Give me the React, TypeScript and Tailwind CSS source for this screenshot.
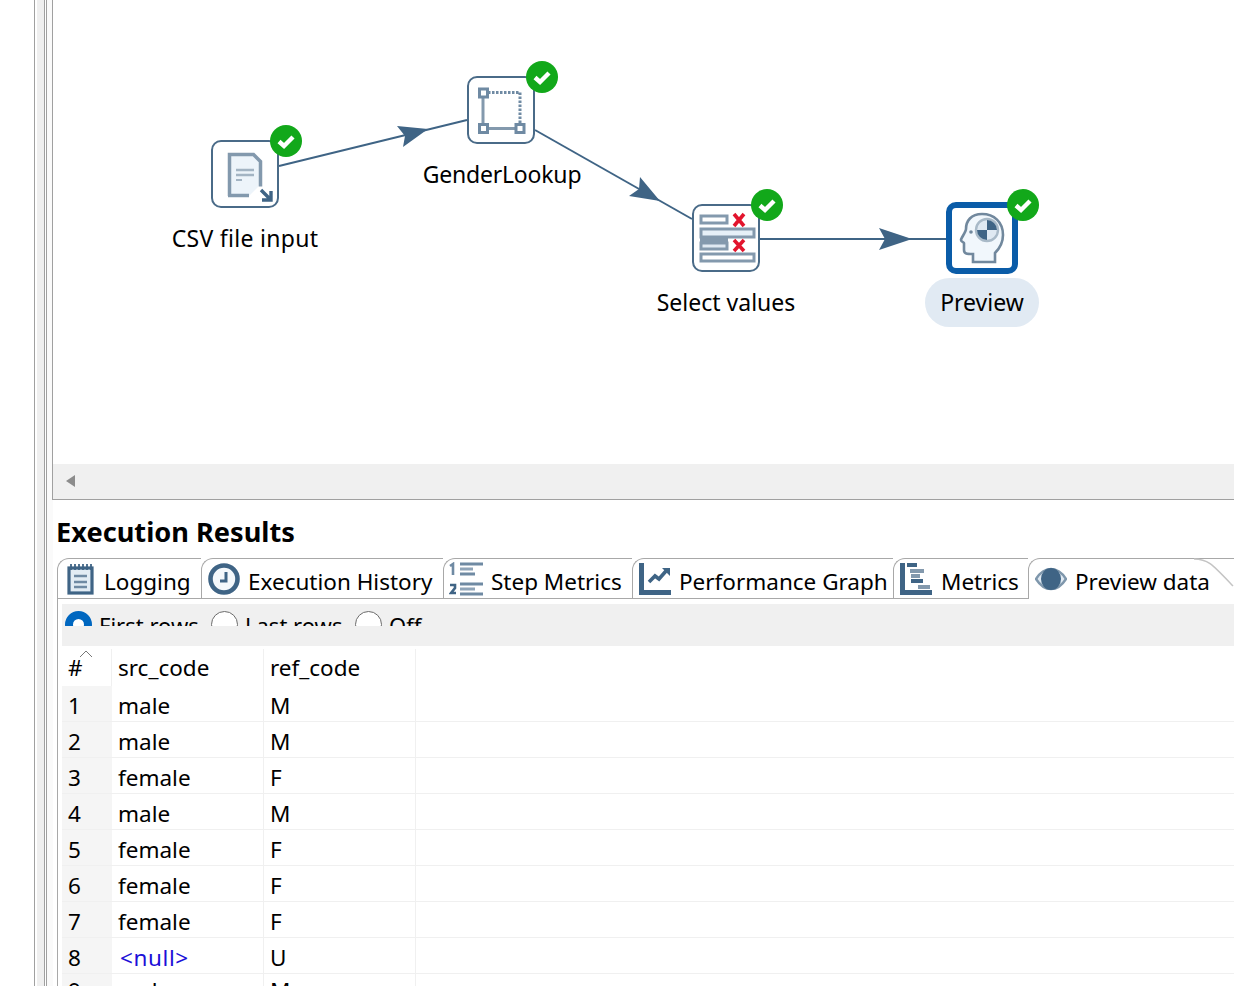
import React from 'react';

const ink = '#3f6485';
const soft = '#8399ad';

const CheckBadge: React.FC<{ className: string }> = ({ className }) => (
  <svg className={`absolute ${className}`} width="32" height="32" viewBox="0 0 32 32">
    <circle cx="16" cy="16" r="16" fill="#12a81a" />
    <path d="M9 16.5l5 4.5 9-9" fill="none" stroke="#fff" strokeWidth="4.4" />
  </svg>
);

const CsvIcon = () => (
  <svg width="56" height="56" viewBox="0 0 56 56">
    <path d="M12 8h25l7 7v23l-12 12H12z" fill="#edf4fa" />
    <path d="M12.5 50V8.5h24l7 7v25" fill="none" stroke={soft} strokeWidth="3.5" />
    <path d="M11 49.5h21" stroke={soft} strokeWidth="3.5" />
    <path d="M19 24h18M19 29h18" stroke="#a3b4c3" strokeWidth="2.5" />
    <path d="M19 34h6" stroke="#a3b4c3" strokeWidth="2" />
    <path d="M44 44l9 9M54 45v9h-9" fill="none" stroke={ink} strokeWidth="3.4" />
  </svg>
);

const LookupIcon = () => (
  <svg width="56" height="56" viewBox="0 0 56 56">
    <path d="M10 15v27M15 46.5h27" stroke={soft} strokeWidth="3" />
    <path d="M15 10.5h32v31" fill="none" stroke="#6f8aa3" strokeWidth="3" strokeDasharray="2.5 1.5" />
    <rect x="6.5" y="7" width="8" height="8" fill="#fff" stroke="#6f8aa3" strokeWidth="3" />
    <rect x="6.5" y="42.5" width="8" height="8" fill="#fff" stroke="#6f8aa3" strokeWidth="3" />
    <rect x="43" y="42.5" width="8" height="8" fill="#fff" stroke="#6f8aa3" strokeWidth="3" />
  </svg>
);

const SelectIcon = () => (
  <svg width="60" height="60" viewBox="0 0 60 60">
    <rect x="5" y="8" width="26" height="7" fill="#fff" stroke={soft} strokeWidth="3" />
    <rect x="5" y="21" width="53" height="8" fill="#e6f0f8" stroke={soft} strokeWidth="3" />
    <rect x="4" y="29" width="28" height="6" fill={soft} />
    <rect x="5" y="35" width="26" height="6" fill="#dfe9f2" stroke={soft} strokeWidth="3" />
    <rect x="5" y="46" width="53" height="7" fill="#fff" stroke={soft} strokeWidth="3" />
    <path d="M38 6l10 12M48 6L38 18M38 32l10 11M48 32L38 43" stroke="#e2142d" strokeWidth="3.6" />
  </svg>
);

const BrainIcon = () => (
  <svg width="48" height="56" viewBox="0 0 48 56">
    <path
      d="M24 4C13 4 8 11 8 19c0 3-5 9-5 11 0 2 3 2 3 3v7c0 4 3 4 9 4v8h22v-9c5-5 8-10 8-18C45 12 36 4 24 4z"
      fill="#f1f7fc"
      stroke="#71889d"
      strokeWidth="2.6"
    />
    <circle cx="29" cy="20" r="11" fill="#dfe9f2" stroke="#a9bac8" strokeWidth="2.4" />
    <path d="M29 10a10 10 0 0 1 10 10H29zM29 20v10a10 10 0 0 1-10-10z" fill={ink} />
    <circle cx="13" cy="22" r="1.8" fill="#71889d" />
  </svg>
);

const LoggingIcon = () => (
  <svg width="28" height="32" viewBox="0 0 28 32">
    <rect x="2" y="5" width="23" height="25" fill="#e2ecf4" stroke={ink} strokeWidth="3.2" />
    <path d="M4 1v6M8 1v6M12 1v6M16 1v6M20 1v6M24 1v6" stroke={ink} strokeWidth="1.8" />
    <path d="M7 13h13M7 19h13M7 24h13" stroke="#6f8aa3" strokeWidth="2.4" />
  </svg>
);

const ClockIcon = () => (
  <svg width="32" height="32" viewBox="0 0 32 32">
    <circle cx="16" cy="16" r="13.5" fill="#f4f8fb" stroke={ink} strokeWidth="4.6" />
    <path d="M18 9v9h-6" fill="none" stroke={ink} strokeWidth="3" />
  </svg>
);

const StepMetricsIcon = () => (
  <svg width="34" height="34" viewBox="0 0 34 34">
    <path d="M1 4l3-2v11" stroke="#6f8aa3" strokeWidth="2.6" fill="none" />
    <path d="M1 23h5v3l-4 5h5" stroke={ink} strokeWidth="2.6" fill="none" />
    <path d="M11 2h23M11 12h15M11 32h23" stroke="#6f8aa3" strokeWidth="2.8" />
    <path d="M11 7h13M11 27h15" stroke="#8fa4b8" strokeWidth="2.8" />
    <path d="M11 22h23" stroke="#6f8aa3" strokeWidth="2.8" />
  </svg>
);

const GraphIcon = () => (
  <svg width="32" height="32" viewBox="0 0 32 32">
    <path d="M2.5 0v29.5H32" fill="none" stroke={ink} strokeWidth="5" />
    <path d="M10 19l6-6 4 3 7-8" fill="none" stroke={ink} strokeWidth="3.6" />
    <path d="M23 5h8v8z" fill={ink} />
  </svg>
);

const GanttIcon = () => (
  <svg width="32" height="32" viewBox="0 0 32 32">
    <path d="M2.5 0v29.5H32" fill="none" stroke={ink} strokeWidth="5" />
    <path d="M7 2h10" stroke={ink} strokeWidth="4" />
    <path d="M10 8h14M11 13h9" stroke={soft} strokeWidth="4" />
    <path d="M11 18h12" stroke={ink} strokeWidth="4" />
    <path d="M18 24h12" stroke={soft} strokeWidth="4" />
  </svg>
);

const EyeIcon = () => (
  <svg width="32" height="24" viewBox="0 0 32 24">
    <path d="M1 12C6 4 11 2 16 2s10 2 15 10c-5 8-10 10-15 10S6 20 1 12z" fill="#dfe9f2" stroke="#7f97ac" strokeWidth="2.4" />
    <ellipse cx="16" cy="12" rx="10" ry="11" fill={ink} />
  </svg>
);

const tabs = [
  { label: 'Logging', width: 'w-[144px]', pad: 'pl-[9px]', gap: 'gap-[9px]', icon: <LoggingIcon /> },
  { label: 'Execution History', width: 'w-[242px]', pad: 'pl-[6px]', gap: 'gap-[8px]', icon: <ClockIcon /> },
  { label: 'Step Metrics', width: 'w-[189px]', pad: 'pl-[5px]', gap: 'gap-[8px]', icon: <StepMetricsIcon /> },
  { label: 'Performance Graph', width: 'w-[261px]', pad: 'pl-[6px]', gap: 'gap-[8px]', icon: <GraphIcon /> },
  { label: 'Metrics', width: 'w-[135px]', pad: 'pl-[6px]', gap: 'gap-[9px]', icon: <GanttIcon /> },
];

const rows = [
  ['1', 'male', 'M'],
  ['2', 'male', 'M'],
  ['3', 'female', 'F'],
  ['4', 'male', 'M'],
  ['5', 'female', 'F'],
  ['6', 'female', 'F'],
  ['7', 'female', 'F'],
  ['8', '<null>', 'U'],
  ['9', 'male', 'M'],
];

const Node: React.FC<{ className: string; children: React.ReactNode }> = ({ className, children }) => (
  <div className={`absolute flex h-[68px] w-[68px] items-center justify-center rounded-[10px] border-2 border-[#4a6b88] bg-white ${className}`}>
    {children}
  </div>
);

const Radio: React.FC<{ on?: boolean; label: string; className: string }> = ({ on, label, className }) => (
  <div className={`flex items-start ${className}`}>
    {on ? (
      <span className="mr-[7px] mt-[7px] h-[27px] w-[27px] shrink-0 rounded-full border-[8px] border-[#0067c0] bg-white" />
    ) : (
      <span className="mr-[7px] mt-[7px] h-[27px] w-[27px] shrink-0 rounded-full border border-[#6b6b6b] bg-white" />
    )}
    <span className="mt-[4px] text-[22px] leading-[34px]">{label}</span>
  </div>
);

export default function App() {
  return (
    <div className="flex h-[986px] w-[1234px] overflow-hidden bg-white font-['Noto_Sans',sans-serif] text-[23px] text-black">
      {/* window sash */}
      <div className="flex h-full w-[53px] shrink-0">
        <div className="w-[34px]" />
        <div className="w-[1px] bg-[#a0a0a0]" />
        <div className="w-[2px]" />
        <div className="w-[7px] bg-[#efefef]" />
        <div className="w-[1px] bg-[#a0a0a0]" />
        <div className="w-[1px]" />
        <div className="w-[1px] bg-[#a0a0a0]" />
        <div className="w-[6px] bg-[#fafafa]" />
      </div>

      <div className="flex min-w-0 flex-1 flex-col">
        {/* transformation canvas */}
        <div className="relative -ml-[1px] h-[464px] shrink-0 border-l border-[#a0a0a0]">
          <svg className="absolute left-[-53px] top-0" width="1234" height="464" viewBox="0 0 1234 464">
            <g stroke="#3f6485" strokeWidth="2" fill="none">
              <path d="M279 166L467 120" />
              <path d="M535 130L692 219" />
              <path d="M760 239H946" />
            </g>
            <g fill="#3f6485">
              <path d="M397 126L428 129L403 147L405 136z" />
              <path d="M640 177L660 201L629 196L639 189z" />
              <path d="M879 228L912 239L879 250L885 239z" />
            </g>
          </svg>

          <Node className="left-[158px] top-[140px]"><CsvIcon /></Node>
          <CheckBadge className="left-[217px] top-[125px]" />
          <div className="absolute left-[92px] top-[221px] w-[200px] text-center tracking-[0.3px]">CSV file input</div>

          <Node className="left-[414px] top-[76px]"><LookupIcon /></Node>
          <CheckBadge className="left-[473px] top-[61px]" />
          <div className="absolute left-[349px] top-[157px] w-[200px] text-center tracking-[-0.2px]">GenderLookup</div>

          <Node className="left-[639px] top-[204px]"><SelectIcon /></Node>
          <CheckBadge className="left-[698px] top-[189px]" />
          <div className="absolute left-[573px] top-[285px] w-[200px] text-center">Select values</div>

          <div className="absolute left-[893px] top-[202px] flex h-[72px] w-[72px] items-center justify-center rounded-[10px] border-[6px] border-[#0a5ca8] bg-white">
            <BrainIcon />
          </div>
          <CheckBadge className="left-[954px] top-[189px]" />
          <div className="absolute left-[872px] top-[278px] flex h-[49px] w-[114px] items-center justify-center rounded-full bg-[#e1eaf3]">Preview</div>
        </div>

        {/* horizontal scroll bar */}
        <div className="-ml-[1px] flex h-[36px] shrink-0 items-center border-b border-l border-[#a0a0a0] bg-[#f0f0f0] pb-[2px] pl-[12px]">
          <svg width="12" height="14" viewBox="0 0 12 14">
            <path d="M10 1v12L1 7z" fill="#8c8c8c" />
          </svg>
        </div>

        {/* execution results */}
        <div className="h-[58px] shrink-0 pl-[3px] pt-[12px] text-[27.2px] font-bold leading-[40px]">Execution Results</div>

        <div className="flex h-[41px] shrink-0 pl-[4px] text-[22.5px]">
          {tabs.map((tab) => (
            <div
              key={tab.label}
              className={`flex h-[41px] items-center overflow-hidden whitespace-nowrap rounded-tl-[12px] border-b border-l border-t border-[#a8a8a8] pt-[3px] ${tab.width} ${tab.pad} ${tab.gap}`}
            >
              <span className="shrink-0 -translate-y-[1px]">{tab.icon}</span>
              <span className="translate-y-[2px]">{tab.label}</span>
            </div>
          ))}
          <div className="relative flex h-[41px] w-[206px] items-center gap-[8px] whitespace-nowrap rounded-tl-[12px] border-l border-t border-[#a8a8a8] pb-[1px] pl-[6px] pt-[3px]">
            <span className="shrink-0 -translate-y-[1px]"><EyeIcon /></span>
            <span className="translate-y-[2px]">Preview data</span>
            <svg className="absolute -top-[1px] right-0" width="40" height="30" viewBox="0 0 40 30">
              <path d="M0 1C14 1 18 6 39 28" fill="none" stroke="#c4c4c4" strokeWidth="1.5" />
            </svg>
          </div>
        </div>

        <div className="ml-[4px] min-h-0 flex-1 border-l border-[#a8a8a8] pl-[4px] pt-[5px] text-[22.5px]">
          {/* clipped radio row */}
          <div className="h-[42px] bg-[#f0f0f0]">
            <div className="relative h-[22px] overflow-hidden">
              <Radio on label="First rows" className="absolute left-[3px] top-0" />
              <Radio label="Last rows" className="absolute left-[149px] top-0" />
              <Radio label="Off" className="absolute left-[293px] top-0" />
            </div>
          </div>

          {/* preview grid */}
          <div className="relative flex h-[40px] items-center pt-[3px]">
            <div className="w-[50px] border-r border-[#f0f0f0] pl-[6px] leading-[37px]">#</div>
            <div className="w-[152px] border-r border-[#f0f0f0] pl-[6px] leading-[37px]">src_code</div>
            <div className="w-[152px] border-r border-[#f0f0f0] pl-[6px] leading-[37px]">ref_code</div>
            <svg className="absolute left-[17px] top-[3px]" width="14" height="9" viewBox="0 0 14 9">
              <path d="M1 8l6-6 6 6" fill="none" stroke="#777" strokeWidth="1" />
            </svg>
          </div>
          {rows.map((row) => {
            // last row runs off the window, keep its tops showing
            const pad = row[0] === '9' ? 'pt-0' : 'pt-[3px]';
            return (
              <div key={row[0]} className="flex h-[36px] border-b border-[#f0f0f0]">
                <div className={`w-[50px] bg-[#f5f5f5] pl-[6px] leading-[34px] ${pad}`}>{row[0]}</div>
                <div className={`w-[152px] border-r border-[#f0f0f0] leading-[34px] ${pad} ${row[1] === '<null>' ? 'pl-[8px] tracking-[0.6px] text-[#1c10d8]' : 'pl-[6px]'}`}>{row[1]}</div>
                <div className={`w-[152px] border-r border-[#f0f0f0] pl-[6px] leading-[34px] ${pad}`}>{row[2]}</div>
              </div>
            );
          })}
        </div>
      </div>
    </div>
  );
}
